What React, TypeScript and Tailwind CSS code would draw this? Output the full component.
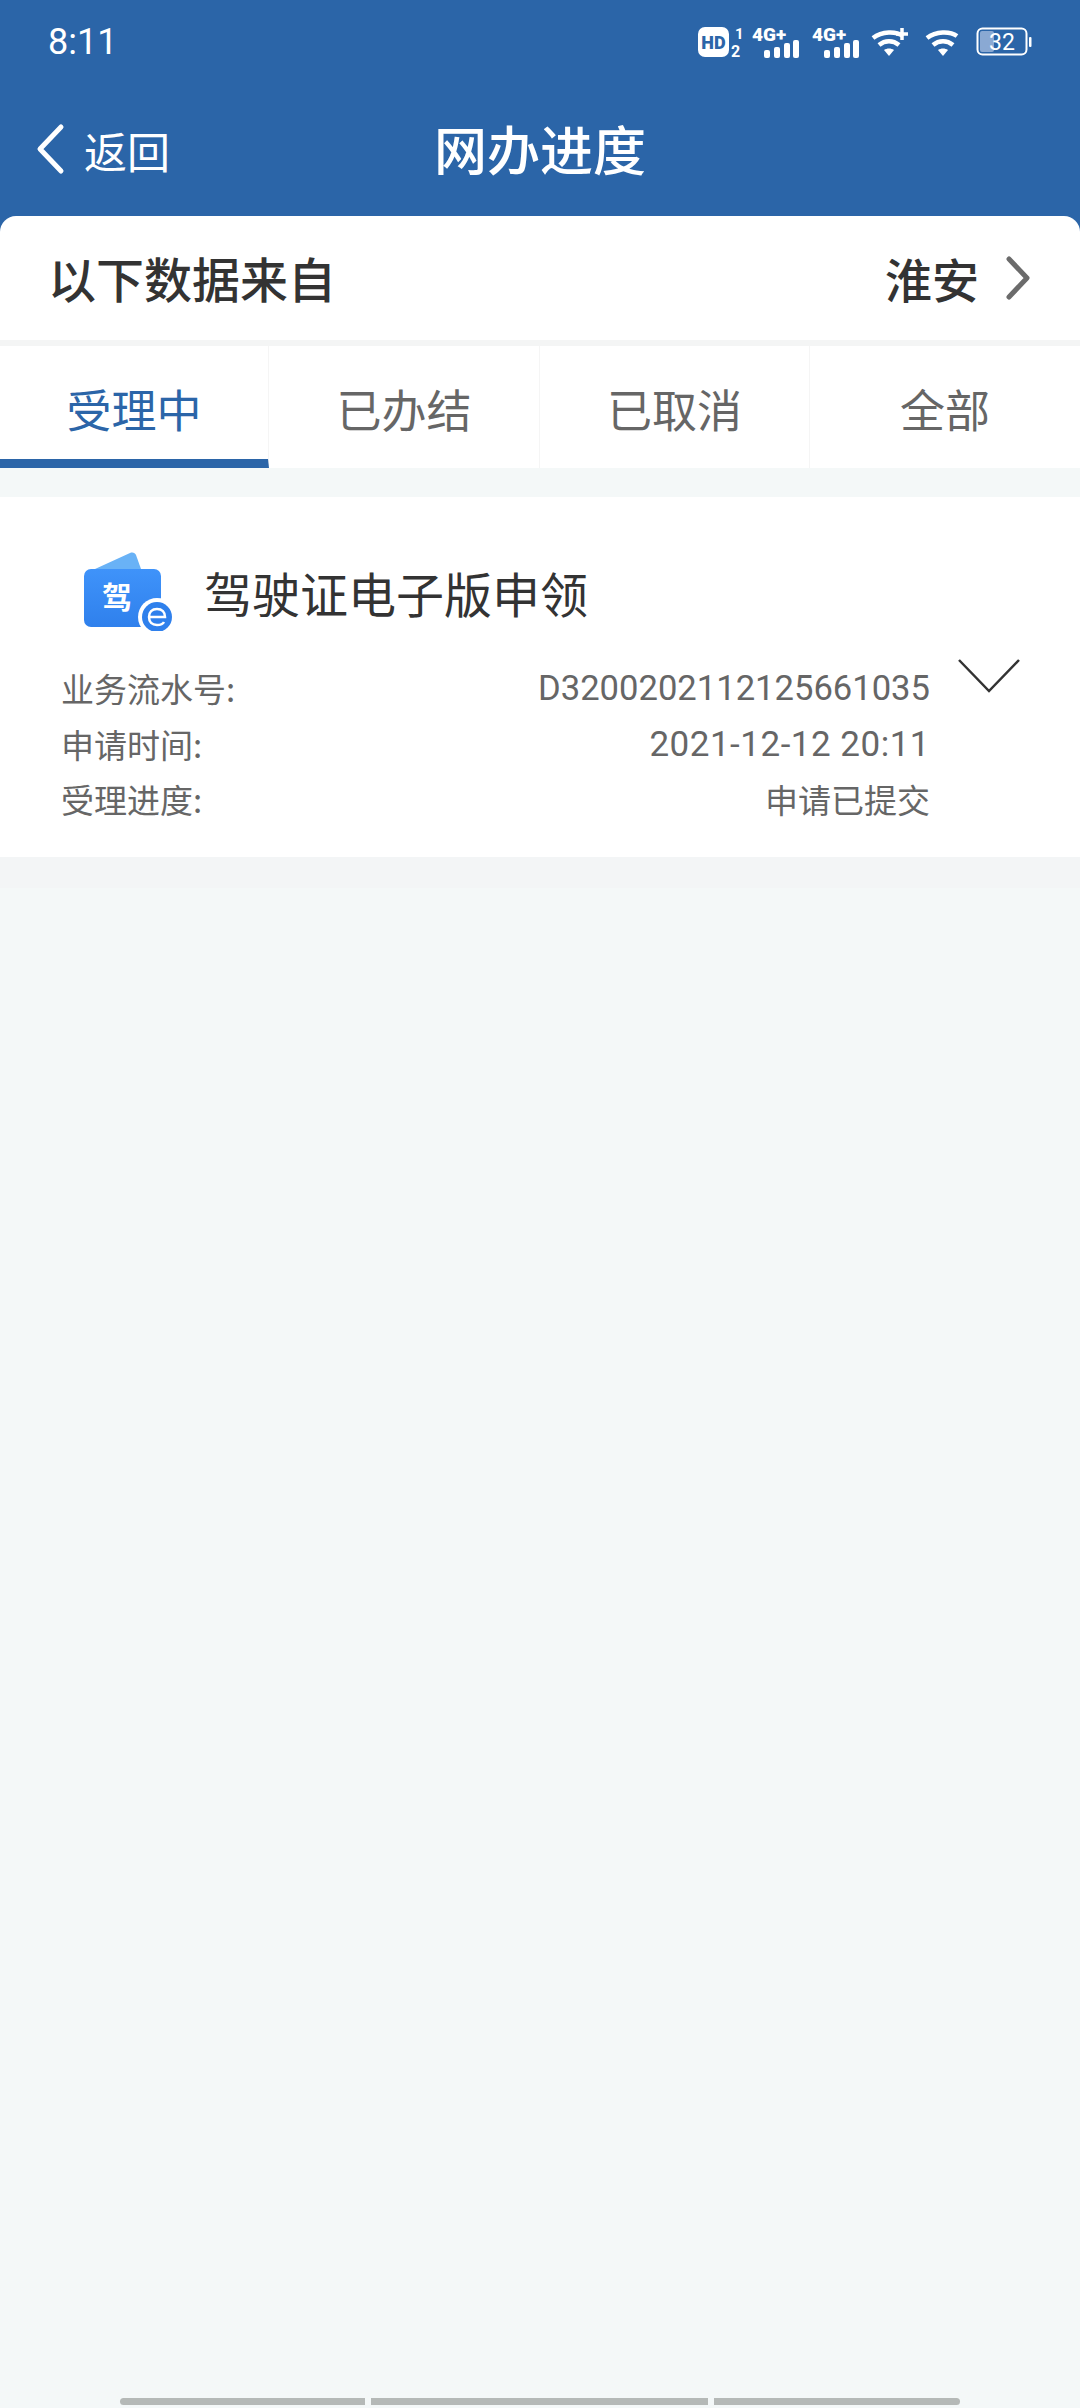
const cjk = "font-['Noto_Sans_CJK_SC','Noto_Sans',sans-serif]";

const rows = [
  { label: "业务流水号:", value: "D3200202112125661035", valueClass: "text-[34.6px] leading-none font-['Roboto',sans-serif]" },
  { label: "申请时间:", value: "2021-12-12 20:11", valueClass: "text-[35px] leading-none tracking-[0.5px] font-['Roboto',sans-serif]" },
  { label: "受理进度:", value: "申请已提交", valueClass: "text-[33px] leading-none" },
];

const tabs = ["受理中", "已办结", "已取消", "全部"];

function Bars() {
  return (
    <svg width="47" height="40" viewBox="0 -4 47 40" fill="white">
      <text x="0" y="15" fontSize="19" fontWeight="900" fontFamily="Roboto, sans-serif">4G+</text>
      <rect x="12" y="24" width="6" height="8" rx="2" />
      <rect x="22" y="21" width="6" height="11" rx="2" />
      <rect x="32" y="17" width="6" height="15" rx="2" />
      <rect x="41" y="14" width="6" height="18" rx="2" />
    </svg>
  );
}

function Wifi({ plus }: { plus?: boolean }) {
  return (
    <svg width="38" height="30" viewBox="0 0 38 30" fill="none" stroke="white" strokeWidth="4.5">
      <path d="M2 11C11 4 25 4 32 9" />
      <path d="M8 18C14 13 22 13 28 18" />
      <path d="M18 29l-5-6c3-2 7-2 10 0z" fill="white" stroke="none" />
      {plus && <path d="M31 1v12M25 7h12" strokeWidth="3.5" stroke="white" />}
    </svg>
  );
}

function StatusBar() {
  return (
    <div className="h-[84px] pl-[48px] pr-[48px] flex items-center justify-between text-white">
      <span className="text-[36px] leading-none font-['Roboto',sans-serif] mt-[-1px]">8:11</span>
      <div className="flex items-center mt-[-1px]">
        <svg width="50" height="40" viewBox="0 -4 50 40" fill="white">
          <rect x="0" y="1" width="31" height="30" rx="7" />
          <text x="15.5" y="23" textAnchor="middle" fontSize="18" fontWeight="900" fill="#2b65a8" fontFamily="Roboto, sans-serif">HD</text>
          <text x="37" y="13" fontSize="15" fontWeight="700" fontFamily="Roboto, sans-serif">1</text>
          <text x="33" y="31" fontSize="16" fontWeight="700" fontFamily="Roboto, sans-serif">2</text>
        </svg>
        <div className="ml-[4px]"><Bars /></div>
        <div className="ml-[13px]"><Bars /></div>
        <div className="ml-[12px]"><Wifi plus /></div>
        <div className="ml-[16px]"><Wifi /></div>
        <svg className="ml-[13px]" width="56" height="30" viewBox="0 0 56 30">
          <rect x="1.5" y="1.5" width="49" height="26" rx="5" fill="none" stroke="white" strokeWidth="2" />
          <rect x="4" y="4" width="14" height="21" rx="2" fill="#8aa9d3" />
          <rect x="53" y="10" width="2.5" height="10" rx="1" fill="white" />
          <text x="26" y="23" textAnchor="middle" fontSize="23" fill="white" fontFamily="Roboto, sans-serif">32</text>
        </svg>
      </div>
    </div>
  );
}

function LicenseIcon() {
  return (
    <div className="relative w-[90px] h-[80px]">
      <svg className="absolute left-0 top-0" width="90" height="80" viewBox="0 0 90 80">
        <defs>
          <linearGradient id="card" x1="0" y1="0" x2="0" y2="1">
            <stop offset="0" stopColor="#3f93fa" />
            <stop offset="1" stopColor="#2f80ec" />
          </linearGradient>
        </defs>
        <path d="M11 18L46 2c3-1 5 0 6 2l5 14z" fill="#69b2f6" />
        <rect x="0" y="18" width="77" height="58" rx="7" fill="url(#card)" />
        <circle cx="73" cy="66" r="19" fill="white" />
        <circle cx="73" cy="66" r="15" fill="#2f80ec" />
        <path d="M65 66h16c0-5-3-8-8-8s-8 3-8 8 3 8 8 8c3 0 6-1 7-3" fill="none" stroke="white" strokeWidth="2.5" />
      </svg>
      <span className={`absolute left-[18px] top-[28px] text-[30px] leading-[32px] font-bold text-white ${cjk}`}>驾</span>
    </div>
  );
}

export default function App() {
  return (
    <div className={`w-[1080px] h-[2408px] flex flex-col bg-[#f4f8f8] overflow-hidden ${cjk}`}>
      <div className="bg-[#2b65a8] h-[216px] text-white">
        <StatusBar />
        <div className="relative h-[132px] flex items-center justify-center">
          <div className="absolute left-[34px] top-[39px] flex items-center">
            <svg width="34" height="54" viewBox="0 0 34 54" fill="none" stroke="white" strokeWidth="5" strokeLinecap="round" strokeLinejoin="round">
              <path d="M27 4L6 26l21 22" />
            </svg>
            <span className="ml-[16px] text-[43px] leading-none">返回</span>
          </div>
          <span className="text-[53px] leading-none font-medium mt-[-4px]">网办进度</span>
        </div>
      </div>

      <div className="bg-[#2b65a8]">
        <div className="h-[124px] bg-white rounded-t-[16px] pl-[48px] pr-[49px] flex items-center justify-between text-[#333333]">
          <span className="text-[48px] leading-none font-medium mt-[-2px]">以下数据来自</span>
          <div className="flex items-center">
            <span className="text-[47px] leading-none font-medium mt-[-2px]">淮安</span>
            <svg className="ml-[26px]" width="26" height="44" viewBox="0 0 26 44" fill="none" stroke="#6b6b6b" strokeWidth="5" strokeLinecap="round" strokeLinejoin="round">
              <path d="M4 3l18 19L4 41" />
            </svg>
          </div>
        </div>
      </div>

      <div className="h-[6px] bg-[#f4f5f5]" />

      <div className="h-[122px] bg-white grid grid-cols-[269px_271px_270px_270px]">
        {tabs.map((tab, i) => (
          <div
            key={tab}
            className={`flex items-center justify-center text-[45px] leading-none border-r border-[#f5f5f5] last:border-r-0 ${
              i === 0 ? "text-[#2b65a8] border-b-[9px] border-b-[#2b65a8] pt-[9px]" : "text-[#666666]"
            }`}
          >
            <span className="mt-[3px]">{tab}</span>
          </div>
        ))}
      </div>

      <div className="mt-[29px] h-[360px] bg-white relative">
        <div className="pl-[84px] pt-[54px] flex items-center">
          <LicenseIcon />
          <span className="ml-[30px] text-[48px] leading-none text-[#333333] mt-[2px]">驾驶证电子版申领</span>
        </div>
        <div className="pl-[61px] pr-[150px] mt-[30px] flex flex-col text-[#666666]">
          {rows.map((row) => (
            <div key={row.label} className="h-[55.5px] flex items-center justify-between">
              <span className="text-[33px] leading-none">{row.label}</span>
              <span className={row.valueClass}>{row.value}</span>
            </div>
          ))}
        </div>
        <svg className="absolute left-[956px] top-[160px]" width="66" height="38" viewBox="0 0 66 38" fill="none" stroke="#333333" strokeWidth="2.5">
          <path d="M3 3l30 31L63 3" />
        </svg>
      </div>

      <div className="h-[31px] bg-[#f3f5f6]" />

      <div className="mt-auto mb-[3px] pl-[120px] flex gap-[6px]">
        <div className="w-[245px] h-[7px] rounded-l-full bg-[#b5b9b7]" />
        <div className="w-[337px] h-[7px] bg-[#b5b9b7]" />
        <div className="w-[246px] h-[7px] rounded-r-full bg-[#b5b9b7]" />
      </div>
    </div>
  );
}
